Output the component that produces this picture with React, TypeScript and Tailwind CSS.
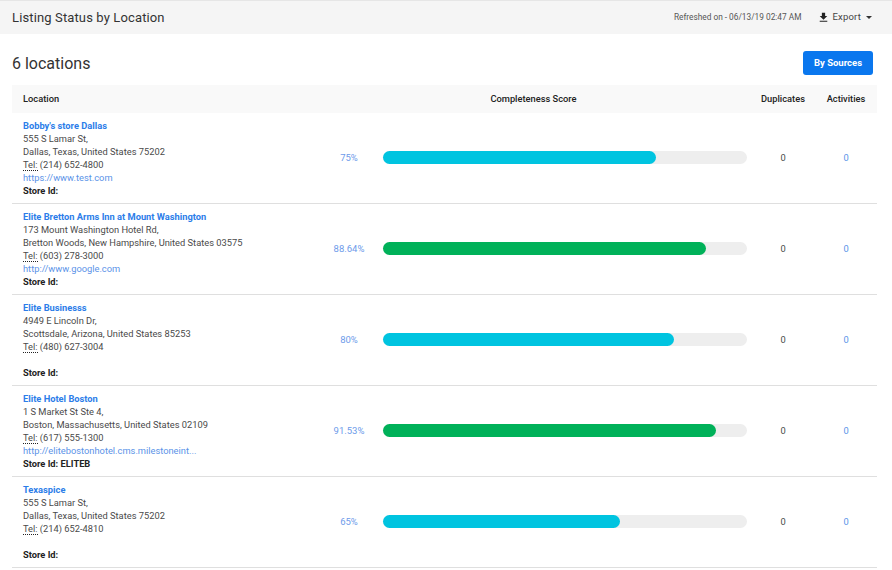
const locations = [
  {
    name: "Bobby's store Dallas",
    street: '555 S Lamar St,',
    city: 'Dallas, Texas, United States 75202',
    tel: '(214) 652-4800',
    url: 'https://www.test.com',
    storeId: '',
    score: '75%',
    width: 75,
    bar: 'bg-[#00c4e0]',
  },
  {
    name: 'Elite Bretton Arms Inn at Mount Washington',
    street: '173 Mount Washington Hotel Rd,',
    city: 'Bretton Woods, New Hampshire, United States 03575',
    tel: '(603) 278-3000',
    url: 'http://www.google.com',
    storeId: '',
    score: '88.64%',
    width: 88.64,
    bar: 'bg-[#00b159]',
  },
  {
    name: 'Elite Businesss',
    street: '4949 E Lincoln Dr,',
    city: 'Scottsdale, Arizona, United States 85253',
    tel: '(480) 627-3004',
    url: '',
    storeId: '',
    score: '80%',
    width: 80,
    bar: 'bg-[#00c4e0]',
  },
  {
    name: 'Elite Hotel Boston',
    street: '1 S Market St Ste 4,',
    city: 'Boston, Massachusetts, United States 02109',
    tel: '(617) 555-1300',
    url: 'http://elitebostonhotel.cms.milestoneint...',
    storeId: 'ELITEB',
    score: '91.53%',
    width: 91.53,
    bar: 'bg-[#00b159]',
  },
  {
    name: 'Texaspice',
    street: '555 S Lamar St,',
    city: 'Dallas, Texas, United States 75202',
    tel: '(214) 652-4810',
    url: '',
    storeId: '',
    score: '65%',
    width: 65,
    bar: 'bg-[#00c4e0]',
  },
];

function DownloadIcon() {
  return (
    <svg viewBox="0 0 24 24" fill="currentColor" className="mr-[2px] h-[13px] w-[13px] text-[#222]">
      <path d="M19 9h-4V3H9v6H5l7 7 7-7zM5 18v2h14v-2H5z" />
    </svg>
  );
}

export default function App() {
  return (
    <div className="h-[570px] w-[892px] overflow-hidden bg-white font-['Roboto',sans-serif] text-[#4a4a4a]">
      <div className="flex h-[34px] items-center justify-between border-t border-[#e6e6e6] bg-[#f5f5f5] pl-3 pr-5">
        <h1 className="text-[13px] tracking-[0.13px] text-[#333]">Listing Status by Location</h1>
        <div className="flex items-center">
          <span className="text-[8.3px] text-[#555]">Refreshed on - 06/13/19 02:47 AM</span>
          <span className="mb-[1px] ml-4 flex items-center text-[9.5px] tracking-[0.2px] text-[#444]">
            <DownloadIcon />
            Export
            <span className="ml-[5px] h-0 w-0 border-x-[3.5px] border-t-[3.5px] border-x-transparent border-t-[#333]" />
          </span>
        </div>
      </div>

      <div className="flex h-[51px] items-center justify-between pl-3 pr-[19px] pt-[7px]">
        <h2 className="pt-[2px] text-[16px] text-[#333]">6 locations</h2>
        <button className="h-6 w-[70px] rounded-[3px] bg-[#0a77ee] pt-[1px] text-[9.5px] font-bold text-white">
          By Sources
        </button>
      </div>

      <div className="mx-3 w-[865px]">
        <div className="grid h-[28px] grid-cols-[308px_427px_72px_54px] items-center bg-[#f9f9f9] text-[9.3px] font-medium text-[#222]">
          <div className="pl-[11px]">Location</div>
          <div className="text-center">Completeness Score</div>
          <div className="text-center">Duplicates</div>
          <div className="text-center">Activities</div>
        </div>

        {locations.map((l) => (
          <div
            key={l.name}
            className="grid h-[91px] grid-cols-[308px_58px_369px_72px_54px] items-center border-b border-[#dfdfdf] text-[9.3px]"
          >
            <div className="pl-[11px] leading-[13px]">
              <div className="font-bold text-[#2b7de9]">{l.name}</div>
              <div>{l.street}</div>
              <div>{l.city}</div>
              <div>
                <span className="border-b border-dotted border-[#222]">Tel:</span> {l.tel}
              </div>
              <div className="h-[13px] text-[#5b93e8]">{l.url}</div>
              <div className="font-bold text-[#222]">Store Id: {l.storeId}</div>
            </div>
            <div className="text-center text-[9.5px] text-[#6d9bea]">{l.score}</div>
            <div className="mb-[1px] pl-[5px]">
              <div className="h-[13px] w-[364px] rounded-full bg-[#eeeeee]">
                <div className={`h-full rounded-full ${l.bar}`} style={{ width: `${l.width}%` }} />
              </div>
            </div>
            <div className="text-center">0</div>
            <div className="text-center text-[#5b93e8]">0</div>
          </div>
        ))}
      </div>
    </div>
  );
}
